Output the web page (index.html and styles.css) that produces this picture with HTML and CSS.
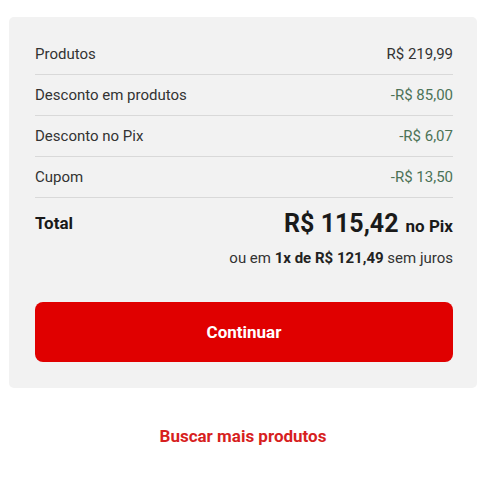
FILE: index.html
```html
<!DOCTYPE html>
<html lang="pt-BR">
<head>
<meta charset="utf-8">
<link rel="stylesheet" href="styles.css">
</head>
<body>
<div class="page">
  <section class="summary">
    <div class="row">
      <span class="label">Produtos</span>
      <span class="value">R$ 219,99</span>
    </div>
    <div class="row">
      <span class="label">Desconto em produtos</span>
      <span class="value discount">-R$ 85,00</span>
    </div>
    <div class="row">
      <span class="label">Desconto no Pix</span>
      <span class="value discount">-R$ 6,07</span>
    </div>
    <div class="row">
      <span class="label">Cupom</span>
      <span class="value discount">-R$ 13,50</span>
    </div>
    <div class="total">
      <div class="total-line">
        <span class="total-label">Total</span>
        <span class="total-price"><span class="big">R$ 115,42</span><span class="pix">no Pix</span></span>
      </div>
      <div class="installments">ou em <b>1x de R$ 121,49</b> sem juros</div>
    </div>
    <button class="continue">Continuar</button>
  </section>
  <a class="more" href="#">Buscar mais produtos</a>
</div>
</body>
</html>
```
FILE: styles.css
```css
* { box-sizing: border-box; }
body {
  margin: 0;
  background: #fff;
  font-family: Roboto, "Liberation Sans", sans-serif;
  color: #333;
}
.page {
  padding: 17px 0 0 9px;
  width: 477px;
  display: flex;
  flex-direction: column;
}
.summary {
  background: #f2f2f2;
  border-radius: 5px;
  padding: 17px 24px 26px 26px;
  display: flex;
  flex-direction: column;
}
.row {
  display: flex;
  justify-content: space-between;
  align-items: center;
  height: 41px;
  border-bottom: 1px solid #d9d9d9;
  font-size: 15px;
  padding-bottom: 1px;
}
.label { color: #333; }
.value { color: #333; }
.discount { color: #4c7357; }
.total {
  padding-top: 11px;
  display: flex;
  flex-direction: column;
}
.total-line {
  display: flex;
  justify-content: space-between;
  align-items: baseline;
}
.total-label {
  font-weight: 700;
  font-size: 17px;
  color: #1a1a1a;
  align-self: center;
  margin-top: -2px;
}
.total-price { color: #1a1a1a; }
.big {
  font-size: 25px;
  font-weight: 700;
}
.pix {
  font-size: 17px;
  font-weight: 700;
  margin-left: 7px;
}
.installments {
  text-align: right;
  font-size: 15px;
  color: #333;
  margin-top: 11px;
}
.installments b { color: #222; font-weight: 700; }
.continue {
  margin-top: 35px;
  height: 60px;
  border: none;
  border-radius: 8px;
  background: #e00000;
  color: #fff;
  font-family: Roboto, "Liberation Sans", sans-serif;
  font-size: 17px;
  font-weight: 700;
  width: 100%;
}
.more {
  align-self: center;
  margin-top: 38px;
  color: #d71f1f;
  font-size: 17px;
  font-weight: 700;
  text-decoration: none;
}
```
